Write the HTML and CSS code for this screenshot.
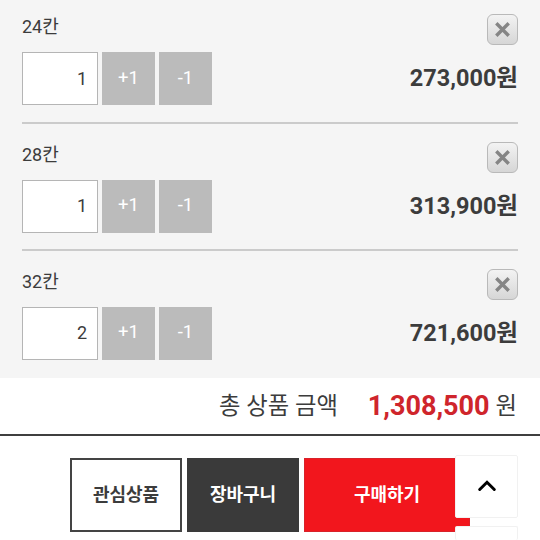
FILE: index.html
```html
<!DOCTYPE html>
<html lang="ko">
<head>
  <meta charset="UTF-8">
  <meta name="viewport" content="width=device-width, initial-scale=1.0">
  <title>상품 옵션</title>
  <link rel="stylesheet" href="styles.css">
</head>
<body>
  <ul class="option-list">
    <li class="option">
      <div class="option-head">
        <span class="option-name">24칸</span>
        <button class="btn-delete"><svg width="17" height="17" viewBox="0 0 17 17"><path d="M2.3 2.3l12.4 12.4M14.7 2.3L2.3 14.7"/></svg></button>
      </div>
      <div class="option-body">
        <input type="text" class="qty" value="1">
        <button class="btn-qty">+1</button>
        <button class="btn-qty">-1</button>
        <strong class="price">273,000원</strong>
      </div>
    </li>
    <li class="option">
      <div class="option-head">
        <span class="option-name">28칸</span>
        <button class="btn-delete"><svg width="17" height="17" viewBox="0 0 17 17"><path d="M2.3 2.3l12.4 12.4M14.7 2.3L2.3 14.7"/></svg></button>
      </div>
      <div class="option-body">
        <input type="text" class="qty" value="1">
        <button class="btn-qty">+1</button>
        <button class="btn-qty">-1</button>
        <strong class="price">313,900원</strong>
      </div>
    </li>
    <li class="option">
      <div class="option-head">
        <span class="option-name">32칸</span>
        <button class="btn-delete"><svg width="17" height="17" viewBox="0 0 17 17"><path d="M2.3 2.3l12.4 12.4M14.7 2.3L2.3 14.7"/></svg></button>
      </div>
      <div class="option-body">
        <input type="text" class="qty" value="2">
        <button class="btn-qty">+1</button>
        <button class="btn-qty">-1</button>
        <strong class="price">721,600원</strong>
      </div>
    </li>
  </ul>

  <div class="total">
    <span class="total-label">총 상품 금액</span>
    <strong class="total-price">1,308,500</strong>
    <span class="total-unit">원</span>
  </div>

  <div class="actions">
    <button class="btn btn-wish">관심상품</button>
    <button class="btn btn-cart">장바구니</button>
    <button class="btn btn-buy">구매하기</button>
  </div>

  <!-- 스크롤 버튼 -->
  <div class="scroll-buttons">
    <button class="btn-scroll"><svg width="20" height="14" viewBox="0 0 20 14"><path d="M2.7 10.5L10 3.3l7.3 7.2"/></svg></button>
    <button class="btn-scroll btn-down"></button>
  </div>
</body>
</html>
```

FILE: styles.css
```css
* {
  box-sizing: border-box;
}
body {
  position: relative;
  height: 540px;
  margin: 0;
  overflow: hidden;
  background: #fff;
  color: #3c3c3c;
  font-family: Roboto, "Noto Sans CJK KR", sans-serif;
}
button, input {
  margin: 0;
  padding: 0;
  font-family: inherit;
}
.option-list {
  height: 378px;
  margin: 0;
  padding: 0 22px;
  background: #f5f5f5;
  list-style: none;
}
.option {
  height: 127.4px;
  padding-top: 17.6px;
  border-bottom: 2px solid #cbcbcb;
}
.option:first-child {
  height: 124px;
  padding-top: 14px;
}
.option:last-child {
  border-bottom: none;
}
.option-head {
  display: flex;
  justify-content: space-between;
  height: 38px;
}
.option-name {
  font-size: 18px;
  line-height: 25px;
}
.btn-delete {
  display: flex;
  align-items: center;
  justify-content: center;
  width: 31px;
  height: 31px;
  border: 1px solid #b9b9b9;
  border-radius: 6px;
  background: linear-gradient(#f3f3f3, #d6d6d6);
}
.btn-delete svg {
  flex-shrink: 0;
}
.btn-delete path {
  fill: none;
  stroke: #858585;
  stroke-width: 3.4;
}
.option-body {
  display: flex;
  align-items: center;
}
.qty {
  width: 76px;
  height: 53px;
  margin-right: 4px;
  padding: 0 10px 1px 0;
  border: 1px solid #b5b5b5;
  border-radius: 0;
  background: #fff;
  color: #3c3c3c;
  font-size: 18px;
  text-align: right;
}
.btn-qty {
  width: 53px;
  height: 53px;
  margin-right: 4px;
  padding-bottom: 2px;
  border: none;
  background: #bbb;
  color: #fff;
  font-size: 18.5px;
}
.price {
  margin-left: auto;
  padding-bottom: 1px;
  font-size: 23.5px;
  line-height: 34px;
}
.total {
  display: flex;
  align-items: center;
  height: 58px;
  padding-right: 23px;
  justify-content: flex-end;
  border-bottom: 2px solid #3f3f3f;
  font-size: 23.3px;
  line-height: 34px;
}
.total-price {
  margin: 0 6px 0 30px;
  color: #cf252c;
  font-size: 27px;
}
.actions {
  display: flex;
  gap: 5px;
  padding: 22px 0 0 70px;
}
.btn {
  width: 112px;
  height: 74px;
  padding-bottom: 4px;
  border: 1px solid #3a3a3a;
  font-size: 18px;
  font-weight: bold;
}
.btn-wish {
  border-width: 2px;
  border-color: #444;
  background: #fff;
  color: #3c3c3c;
}
.btn-cart {
  background: #3a3a3a;
  color: #fff;
}
.btn-buy {
  width: 166px;
  border-color: #d8222a;
  background: #f2161d;
  color: #fff;
}
.scroll-buttons {
  position: absolute;
  top: 455px;
  left: 455px;
  height: 85px;
  overflow: hidden;
}
.btn-scroll {
  display: flex;
  align-items: center;
  justify-content: center;
  width: 63px;
  height: 63px;
  padding-bottom: 2px;
  border: 1px solid #f1f1f1;
  border-radius: 2px;
  background: #fff;
}
.btn-down {
  height: 14px;
  margin-top: 8px;
  border-bottom: none;
}
.btn-scroll path {
  fill: none;
  stroke: #000;
  stroke-width: 3;
  stroke-linecap: round;
}
```
